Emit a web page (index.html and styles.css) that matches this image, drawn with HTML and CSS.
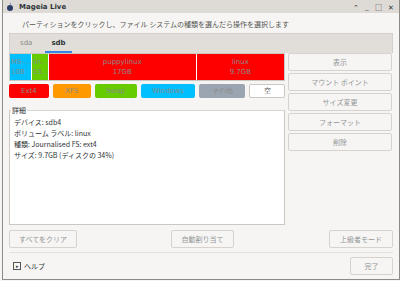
FILE: index.html
```html
<!DOCTYPE html>
<html lang="ja">
<head>
    <meta charset="UTF-8">
    <title>Mageia Live</title>
    <link rel="stylesheet" href="styles.css">
</head>
<body>
    <div class="window">
        <!-- タイトルバー -->
        <div class="titlebar">
            <svg class="app-icon" width="8" height="9" viewBox="0 0 8 9">
                <path d="M4 0 L5 2 L4 3 Z" fill="#5a7db8"/>
                <circle cx="4" cy="6" r="3" fill="#2a3d66"/>
            </svg>
            <span class="title">Mageia Live</span>
            <div class="win-controls">
                <span>&#x2303;</span>
                <span>_</span>
                <span class="max">&#x25A1;</span>
                <span>&#x2715;</span>
            </div>
        </div>

        <div class="content">
            <div class="hint">パーティションをクリックし、ファイル システムの種類を選んだら操作を選択します</div>

            <div class="tabs">
                <span class="tab">sda</span>
                <span class="tab active">sdb</span>
            </div>

            <div class="main">
                <div class="left">
                    <!-- パーティションバー -->
                    <div class="partbar">
                        <div class="part blue" style="width:20px">MS-…<br>10B</div>
                        <div class="part green" style="width:15px">lin…<br>53…</div>
                        <div class="part red" style="width:148px">puppylinux<br>17GB</div>
                        <div class="part red" style="width:88px">linux<br>9.7GB</div>
                    </div>

                    <!-- 凡例 -->
                    <div class="legend">
                        <span class="fs red" style="width:40px">Ext4</span>
                        <span class="fs orange" style="width:38px">XFS</span>
                        <span class="fs green" style="width:42px">Swap</span>
                        <span class="fs blue" style="width:55px">Windows</span>
                        <span class="fs gray" style="width:46px">その他</span>
                        <span class="fs empty" style="width:34px">空</span>
                    </div>

                    <!-- 詳細 -->
                    <fieldset class="details">
                        <legend>詳細</legend>
                        <div>デバイス: sdb4</div>
                        <div>ボリューム ラベル: linux</div>
                        <div>種類: Journalised FS: ext4</div>
                        <div>サイズ: 9.7GB (ディスクの 34%)</div>
                    </fieldset>
                </div>

                <div class="actions">
                    <button>表示</button>
                    <button>マウント ポイント</button>
                    <button>サイズ変更</button>
                    <button>フォーマット</button>
                    <button>削除</button>
                </div>
            </div>

            <div class="row-buttons">
                <button class="clear">すべてをクリア</button>
                <button class="auto">自動割り当て</button>
                <button class="expert">上級者モード</button>
            </div>

            <div class="footer">
                <span class="help"><span class="expander">&#x25B8;</span>ヘルプ</span>
                <button class="done">完了</button>
            </div>
        </div>
    </div>
</body>
</html>
```

FILE: styles.css
```css
body { margin: 0; font-family: "Noto Sans CJK JP", "Noto Sans", sans-serif; font-size: 7px; color: #2e3436; background: #f6f5f4; }
.window { width: 396px; height: 279px; margin-left: 2px; border: 1px solid #8e8a86; border-top: none; background: #f6f5f4; overflow: hidden; }
.titlebar { height: 13px; background: #dedbd7; display: flex; align-items: center; padding-left: 3px; }
.app-icon { margin-right: 5px; }
.title { font-family: "DejaVu Sans", sans-serif; font-weight: bold; font-size: 7px; color: #2e3436; }
.win-controls { margin-left: auto; display: flex; gap: 6px; padding-right: 5px; font-size: 7px; color: #2e3436; }
.content { padding: 0 6px 0 6px; }
.hint { color: #555753; margin: 3px 0 0 13px; height: 17px; line-height: 16px; }
.tabs { height: 19px; background: #e1deda; border: 1px solid #d3cfcb; border-bottom: none; display: flex; align-items: center; padding-left: 4px; gap: 7px; }
.tab { font-family: "DejaVu Sans", sans-serif; font-size: 7px; color: #8a8a88; padding: 0 6px; height: 19px; line-height: 19px; box-sizing: border-box; }
.tab.active { color: #2e3436; font-weight: bold; border-bottom: 2px solid #3584e4; }
.main { display: flex; gap: 3px; }
.left { width: 276px; }
.partbar { display: flex; gap: 1px; height: 26px; border: 1px solid #cdc7c2; background: #fff; }
.part { font-family: "DejaVu Sans", sans-serif; font-size: 7px; color: #8a8a88; text-align: center; line-height: 10px; padding-top: 3px; overflow: hidden; white-space: nowrap; }
.partbar .part:nth-child(1), .partbar .part:nth-child(2) { text-align: left; padding-left: 1px; }
.red { background: #ff0000; }
.blue { background: #00bfff; }
.green { background: #66cc00; }
.orange { background: #ff9900; }
.gray { background: #9aa5b1; }
.legend { display: flex; gap: 4px; margin: 3px 0 0 0; height: 14px; }
.fs { font-family: "DejaVu Sans", sans-serif; font-size: 7px; color: #8a8a88; text-align: center; line-height: 14px; border-radius: 2px; }
.fs.empty { background: #fff; border: 1px solid #cdc7c2; line-height: 12px; color: #555; }
.details { margin: 8px 0 0 0; padding: 3px 4px; height: 119px; box-sizing: border-box; border: 1px solid #cdc7c2; border-top-color: #d8d4d0; background: #fff; line-height: 11px; color: #2e3436; }
.details legend { padding: 0 1px; margin-left: -3px; color: #2e3436; line-height: 8px; }
.actions { display: flex; flex-direction: column; gap: 2px; width: 104px; }
button { font-family: "Noto Sans CJK JP", "Noto Sans", sans-serif; font-size: 7px; color: #929595; background: #f6f5f4; border: 1px solid #d6d2ce; border-radius: 2px; height: 18px; padding: 0; }
.row-buttons { display: flex; margin-top: 5px; height: 17px; padding-bottom: 5px; border-bottom: 1px solid #e2dfdc; }
.row-buttons .clear { width: 68px; }
.row-buttons .auto { width: 63px; margin-left: 94px; }
.row-buttons .expert { width: 64px; margin-left: auto; }
.footer { display: flex; align-items: center; margin-top: 4px; }
.help { color: #2e3436; margin-left: 4px; display: flex; align-items: center; }
.expander { display: inline-block; width: 6px; height: 6px; border: 1px solid #555; font-size: 5px; line-height: 6px; text-align: center; margin-right: 3px; }
.done { width: 43px; margin-left: auto; }
```
